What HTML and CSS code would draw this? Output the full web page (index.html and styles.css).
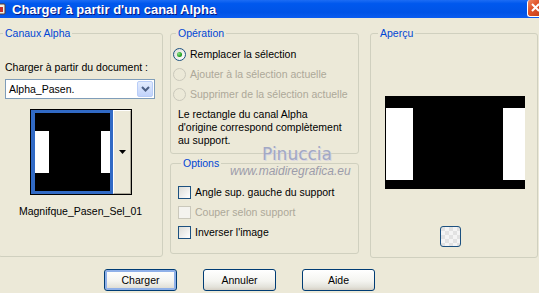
FILE: index.html
```html
<!DOCTYPE html>
<html lang="fr">
<head>
    <meta charset="UTF-8">
    <meta name="viewport" content="width=device-width, initial-scale=1.0">
    <title>Charger à partir d'un canal Alpha</title>
    <link rel="stylesheet" href="styles.css">
</head>
<body>
    <div class="window">
        <div class="titlebar">
            <span class="app-icon">
                <svg width="6" height="14" viewBox="0 0 6 14">
                    <rect x="-4" y="2" width="9" height="10" rx="1" fill="#f4f0e6" stroke="#5a3a2a"/>
                    <rect x="-2" y="5" width="5" height="5" fill="#c8302a"/>
                </svg>
            </span>
            <span class="title">Charger à partir d'un canal Alpha</span>
            <span class="close">
                <svg width="11" height="15" viewBox="0 0 11 15">
                    <path d="M4 4 L11 11 M11 4 L4 11" stroke="#fff" stroke-width="2"/>
                </svg>
            </span>
        </div>

        <div class="dialog">
            <div class="panels">
                <fieldset class="group group-channels">
                    <legend>Canaux Alpha</legend>
                    <div class="field-label">Charger à partir du document :</div>
                    <div class="combo">
                        <span class="combo-value">Alpha_Pasen.</span>
                        <span class="combo-btn">
                            <svg width="9" height="6" viewBox="0 0 9 6">
                                <path d="M1 1 L4.5 4.5 L8 1" fill="none" stroke="#4d6185" stroke-width="2"/>
                            </svg>
                        </span>
                    </div>
                    <div class="thumb-picker">
                        <div class="thumb">
                            <div class="mask">
                                <span class="bar bar-left"></span>
                                <span class="bar bar-right"></span>
                            </div>
                        </div>
                        <div class="thumb-btn">
                            <svg width="7" height="4" viewBox="0 0 7 4">
                                <path d="M0 0 H7 L3.5 4 Z" fill="#000"/>
                            </svg>
                        </div>
                    </div>
                    <div class="thumb-name">Magnifque_Pasen_Sel_01</div>
                </fieldset>

                <div class="middle">
                    <fieldset class="group group-op">
                        <legend>Opération</legend>
                        <div class="option-row">
                            <span class="radio checked"></span>
                            <span>Remplacer la sélection</span>
                        </div>
                        <div class="option-row disabled">
                            <span class="radio"></span>
                            <span>Ajouter à la sélection actuelle</span>
                        </div>
                        <div class="option-row disabled">
                            <span class="radio"></span>
                            <span>Supprimer de la sélection actuelle</span>
                        </div>
                        <p class="note">Le rectangle du canal Alpha<br>d'origine correspond complètement<br>au support.</p>
                    </fieldset>

                    <fieldset class="group group-options">
                        <legend>Options</legend>
                        <div class="option-row">
                            <span class="check"></span>
                            <span>Angle sup. gauche du support</span>
                        </div>
                        <div class="option-row disabled">
                            <span class="check"></span>
                            <span>Couper selon support</span>
                        </div>
                        <div class="option-row">
                            <span class="check"></span>
                            <span>Inverser l'image</span>
                        </div>
                    </fieldset>

                    <div class="watermark">
                        <span class="wm-name">Pinuccia</span>
                        <span class="wm-site">www.maidiregrafica.eu</span>
                    </div>
                </div>

                <fieldset class="group group-preview">
                    <legend>Aperçu</legend>
                    <div class="preview">
                        <span class="bar pv-left"></span>
                        <span class="bar pv-right"></span>
                    </div>
                    <div class="pv-tool"></div>
                </fieldset>
            </div>

            <div class="buttons">
                <button class="default">Charger</button>
                <button>Annuler</button>
                <button>Aide</button>
            </div>
        </div>
    </div>
</body>
</html>
```

FILE: styles.css
```css
body {
    margin: 0;
    background: #ece9d8;
    font-family: "Liberation Sans", Arial, sans-serif;
    font-size: 10.5px;
    line-height: 13px;
    color: #000;
    overflow: hidden;
}

.window {
    width: 539px;
    height: 293px;
    overflow: hidden;
}

/* title bar */
.titlebar {
    height: 18px;
    display: flex;
    align-items: center;
    background: linear-gradient(#1c6cf4 0%, #0058ee 20%, #0053e6 70%, #0a5cf0 100%);
}

.app-icon {
    width: 6px;
    height: 14px;
    margin-right: 6px;
    display: flex;
}

.title {
    flex: 1;
    color: #fff;
    font-weight: bold;
    font-size: 13px;
    text-shadow: 1px 1px #0a1883;
    white-space: nowrap;
}

.close {
    width: 11px;
    height: 16px;
    align-self: flex-start;
    background: linear-gradient(135deg, #f08a63 0%, #e0552b 45%, #c8401c 100%);
    border-left: 1px solid #fff;
    border-bottom: 1px solid #fff;
    border-radius: 3px 0 0 3px;
    display: flex;
}

/* dialog */
.dialog {
    padding-top: 9px;
}

.panels {
    display: flex;
    align-items: flex-start;
}

.group {
    margin: 0;
    border: 1px solid #d0d0bf;
    border-radius: 3px;
    box-sizing: border-box;
}

.group legend {
    color: #0046d5;
    padding: 0 2px;
    line-height: 13px;
}

.group-channels {
    margin-left: -2px;
    width: 165px;
    height: 230px;
    padding: 21px 6px 0 6px;
}

.group-channels legend {
    margin-left: -2px;
}

.field-label {
    margin-bottom: 5px;
    white-space: nowrap;
}

.combo {
    width: 150px;
    height: 20px;
    box-sizing: border-box;
    border: 1px solid #7f9db9;
    background: #fff;
    display: flex;
    align-items: center;
    justify-content: space-between;
}

.combo-value {
    padding-left: 3px;
}

.combo-btn {
    width: 16px;
    height: 16px;
    margin-right: 1px;
    box-sizing: border-box;
    border: 1px solid #b9cdf7;
    border-radius: 2px;
    background: linear-gradient(#e3ecfd, #c1d3fb);
    display: flex;
    align-items: center;
    justify-content: center;
}

.thumb-picker {
    margin: 10px 0 0 25px;
    width: 102px;
    height: 86px;
    box-sizing: border-box;
    border: 1px solid #000;
    display: flex;
}

.thumb {
    width: 82px;
    height: 84px;
    box-sizing: border-box;
    border: 3px solid #316ac5;
    border-left-width: 4px;
    background: #000;
    padding: 1px 0 1px 0;
}

.mask {
    height: 100%;
    display: flex;
    align-items: center;
    justify-content: space-between;
}

.bar {
    display: block;
    background: #fff;
}

.bar-left {
    width: 14px;
    height: 42px;
}

.bar-right {
    width: 9px;
    height: 42px;
}

.thumb-btn {
    flex: 1;
    box-sizing: border-box;
    border: 1px solid;
    border-color: #fff #aca899 #aca899 #fff;
    display: flex;
    align-items: center;
    justify-content: center;
}

.thumb-name {
    margin-top: 10px;
    text-align: center;
}

/* middle column */
.middle {
    position: relative;
    margin-left: 7px;
    width: 189px;
}

.group-op {
    height: 127px;
    padding: 4px 4px 0 2px;
}

.group-op legend,
.group-options legend {
    margin-left: 3px;
}

.group-options {
    margin-top: 3px;
    height: 97px;
    padding: 12px 4px 0 7px;
}

.option-row {
    height: 20px;
    display: flex;
    align-items: center;
    gap: 4px;
    white-space: nowrap;
}

.option-row.disabled {
    color: #aca899;
}

.radio {
    width: 13px;
    height: 13px;
    box-sizing: border-box;
    border-radius: 50%;
    border: 1px solid #1c5180;
    background: linear-gradient(135deg, #dcdcd7, #fff);
    display: flex;
    align-items: center;
    justify-content: center;
}

.radio.checked::after {
    content: "";
    width: 5px;
    height: 5px;
    border-radius: 50%;
    background: radial-gradient(circle at 35% 35%, #8ee08e, #21a121 60%, #1a8a1a);
}

.disabled .radio {
    border-color: #cac8bb;
    background: #ece9d8;
}

.check {
    width: 13px;
    height: 13px;
    box-sizing: border-box;
    border: 1px solid #1c5180;
    background: linear-gradient(135deg, #dcdcd7, #fff);
}

.disabled .check {
    border-color: #cac8bb;
    background: #f4f3ee;
}

.note {
    margin: 4px 0 0 5px;
    white-space: nowrap;
}

.watermark {
    position: absolute;
    left: 60px;
    top: 117px;
    display: flex;
    flex-direction: column;
    pointer-events: none;
}

.wm-name {
    margin-left: 32px;
    font-family: "DejaVu Sans", sans-serif;
    font-size: 17px;
    line-height: 20px;
    color: #a2a8c4;
    text-shadow: 1px 1px #d9d6e2;
}

.wm-site {
    font-size: 12px;
    line-height: 14px;
    font-style: italic;
    color: #9c9caa;
}

/* preview */
.group-preview {
    margin-left: 11px;
    width: 168px;
    height: 231px;
    padding: 0 0 0 7px;
}

.preview {
    margin: 56px 0 0 7px;
    width: 140px;
    height: 93px;
    box-sizing: border-box;
    background: #000;
    padding: 12px 0 9px 1px;
    display: flex;
    justify-content: space-between;
}

.pv-left {
    width: 27px;
}

.pv-right {
    width: 22px;
}

.pv-tool {
    margin: 37px 0 0 62px;
    width: 21px;
    height: 21px;
    box-sizing: border-box;
    border: 1px solid #1c5180;
    border-radius: 3px;
    background: repeating-conic-gradient(#f4f4f4 0 25%, #e2e2e2 0 50%) 0 0 / 8px 8px;
}

/* buttons */
.buttons {
    margin-top: 11px;
    padding-left: 104px;
    display: flex;
    gap: 26px;
}

.buttons button {
    width: 73px;
    height: 22px;
    font-family: inherit;
    font-size: 10.5px;
    color: #000;
    border: 1px solid #003c74;
    border-radius: 3px;
    background: linear-gradient(#fff 0%, #f4f4f0 55%, #e3e2da 85%, #d6d0c5 100%);
    padding: 0;
}

.buttons button.default {
    box-shadow: inset 0 0 0 2px #8fb0e8;
}
```
